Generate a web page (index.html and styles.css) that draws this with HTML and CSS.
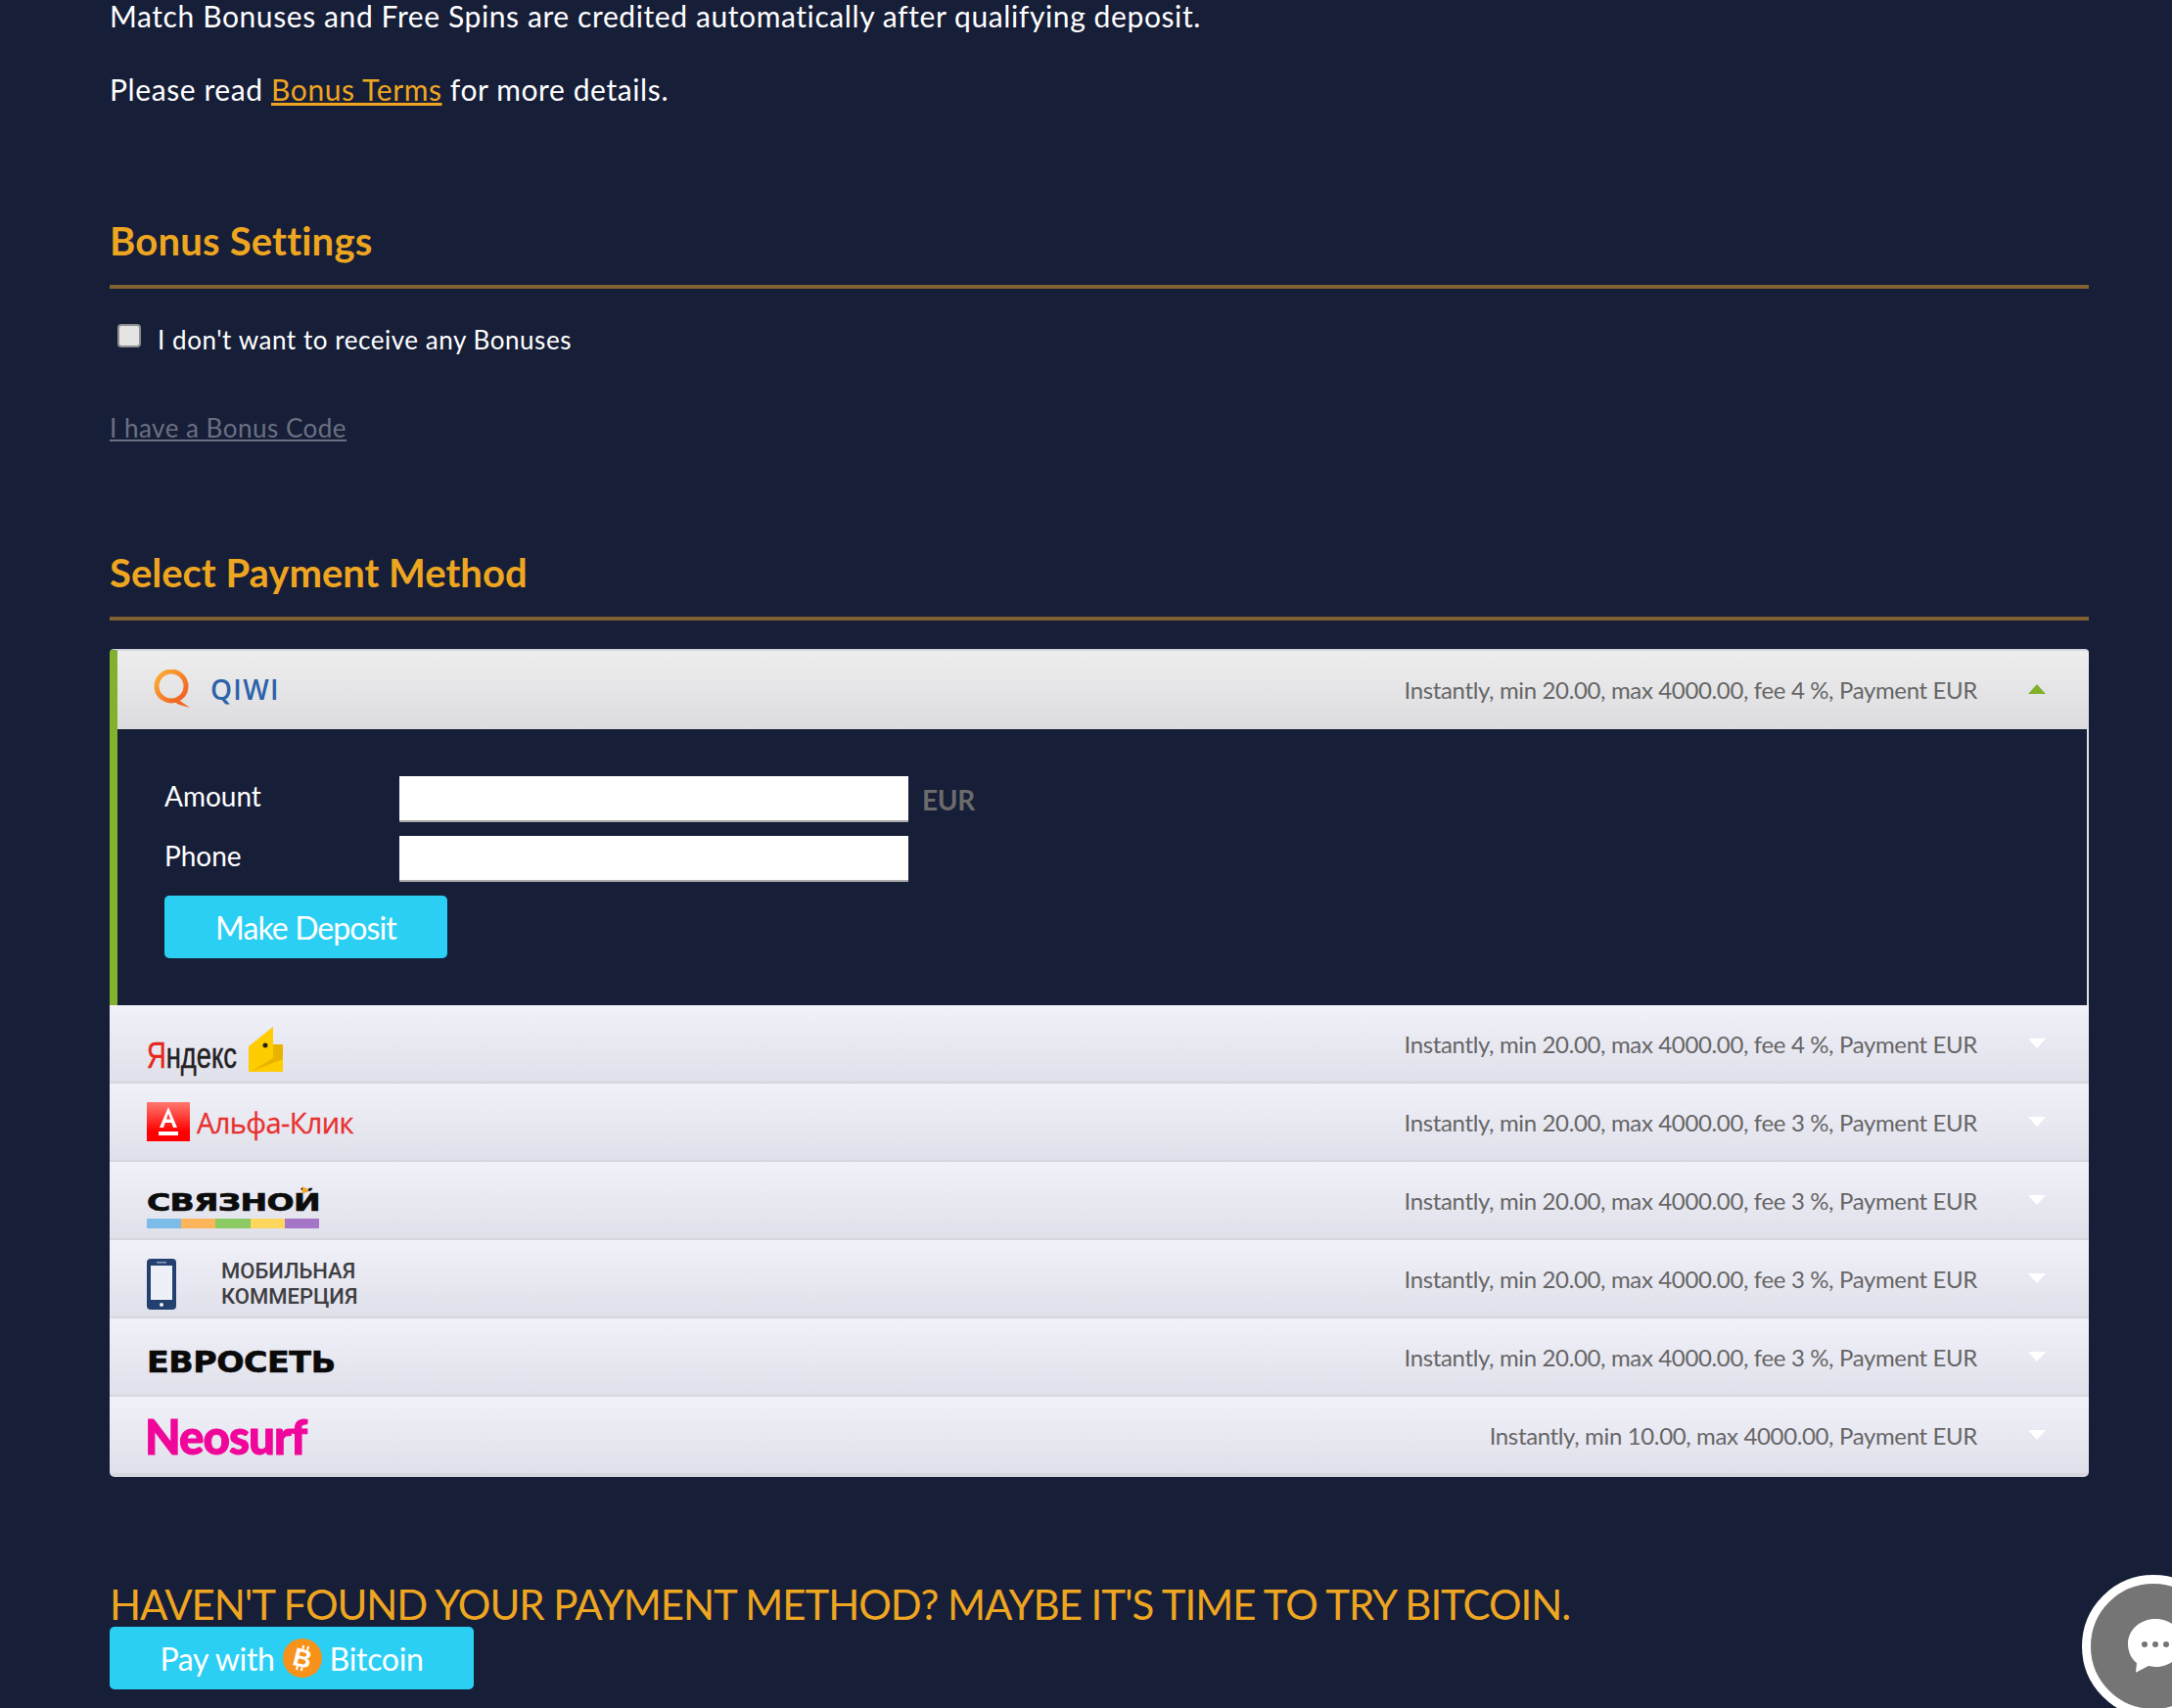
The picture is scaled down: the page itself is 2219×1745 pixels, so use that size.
FILE: index.html
```html
<!DOCTYPE html>
<html lang="en">
<head>
<meta charset="utf-8">
<title>Deposit</title>
<link rel="stylesheet" href="styles.css">
</head>
<body>
<main class="page">
  <p class="lead">Match Bonuses and Free Spins are credited automatically after qualifying deposit.</p>
  <p class="lead second">Please read <a class="terms" href="#">Bonus Terms</a> for more details.</p>

  <h2 class="section-title bonus-title">Bonus Settings</h2>
  <label class="check-row"><input class="check" type="checkbox"><span>I don't want to receive any Bonuses</span></label>
  <a class="code-link" href="#">I have a Bonus Code</a>

  <h2 class="section-title pay-title">Select Payment Method</h2>

  <section class="methods">
    <div class="row row-active">
      <div class="logo logo-qiwi">
        <svg class="q-ring" width="40" height="40" viewBox="0 0 40 40"><defs><linearGradient id="qg" x1="0" y1="0" x2="1" y2="1"><stop offset="0" stop-color="#fbb034"/><stop offset="1" stop-color="#f15a24"/></linearGradient></defs><circle cx="19" cy="17" r="15" fill="none" stroke="url(#qg)" stroke-width="5"/><path d="M17 30l8 0 13 9-11-3z" fill="#f26b21"/></svg>
        <span>QIWI</span>
      </div>
      <div class="info">Instantly, min 20.00, max 4000.00, fee 4 %, Payment EUR</div>
      <span class="arrow arrow-up"></span>
    </div>
    <form class="deposit">
      <div class="field"><label class="field-label">Amount</label><input class="field-input" type="text"><span class="cur">EUR</span></div>
      <div class="field"><label class="field-label">Phone</label><input class="field-input" type="text"></div>
      <button class="btn btn-deposit" type="button">Make Deposit</button>
    </form>

    <div class="row">
      <div class="logo logo-yandex">
        <span class="ya-text"><b>Я</b>ндекс</span>
        <svg class="wallet" width="36" height="48" viewBox="0 0 36 48"><path d="M1 21L26 1v18h10v28H1z" fill="#ffcc00"/><path d="M26 19h10v15L3 47l23-14z" fill="#e8b400"/><circle cx="18" cy="20" r="2.500" fill="#222"/></svg>
      </div>
      <div class="info">Instantly, min 20.00, max 4000.00, fee 4 %, Payment EUR</div>
      <span class="arrow"></span>
    </div>
    <div class="row">
      <div class="logo logo-alfa">
        <span class="alfa-mark"><svg width="26" height="32" viewBox="0 0 26 32"><path d="M13 1L4 22h4l1.800-5h6.400L18 22h4zM11 13.500l2-6 2 6z" fill="#fff"/><rect x="3" y="26" width="20" height="4" fill="#fff"/></svg></span>
        <span class="alfa-text">Альфа-Клик</span>
      </div>
      <div class="info">Instantly, min 20.00, max 4000.00, fee 3 %, Payment EUR</div>
      <span class="arrow"></span>
    </div>
    <div class="row">
      <div class="logo logo-svyaz">
        <span class="svyaz-text">СВЯЗНОЙ</span>
        <span class="strip"><i class="s1"></i><i class="s2"></i><i class="s3"></i><i class="s4"></i><i class="s5"></i></span>
        <span class="svyaz-tick"></span>
      </div>
      <div class="info">Instantly, min 20.00, max 4000.00, fee 3 %, Payment EUR</div>
      <span class="arrow"></span>
    </div>
    <div class="row">
      <div class="logo logo-mobile">
        <svg class="phone" width="30" height="52" viewBox="0 0 30 52"><rect width="30" height="52" rx="4" fill="#24406f"/><rect x="4" y="7" width="22" height="35" fill="#eef0f7"/><rect x="10" y="3" width="10" height="1.500" fill="#8fa0c0"/><circle cx="15" cy="47" r="2" fill="#eef0f7"/></svg>
        <span class="mobile-text">МОБИЛЬНАЯ<br>КОММЕРЦИЯ</span>
      </div>
      <div class="info">Instantly, min 20.00, max 4000.00, fee 3 %, Payment EUR</div>
      <span class="arrow"></span>
    </div>
    <div class="row">
      <div class="logo logo-evro"><span class="evro-text">ЕВРОСЕТЬ</span></div>
      <div class="info">Instantly, min 20.00, max 4000.00, fee 3 %, Payment EUR</div>
      <span class="arrow"></span>
    </div>
    <div class="row row-last">
      <div class="logo logo-neo"><span class="neo-text">Neosurf</span></div>
      <div class="info">Instantly, min 10.00, max 4000.00, Payment EUR</div>
      <span class="arrow"></span>
    </div>
  </section>

  <h3 class="bitcoin-title">HAVEN'T FOUND YOUR PAYMENT METHOD? MAYBE IT'S TIME TO TRY BITCOIN.</h3>
  <button class="btn btn-bitcoin" type="button">Pay with
    <svg class="btc" width="40" height="40" viewBox="0 0 40 40"><circle cx="20" cy="20" r="20" fill="#f7931a"/><text x="20" y="29" text-anchor="middle" transform="rotate(14 20 20)" class="btc-b">B</text><path d="M18 7v4M23 7v4M17 29v4M22 29v4" stroke="#fff" stroke-width="2" transform="rotate(14 20 20)"/></svg>
    Bitcoin</button>
</main>

<div class="chat">
  <svg width="60" height="60" viewBox="0 0 60 60"><path d="M30 3c-15 0-28 11-28 26 0 9 4 16 9 20l-1 10 13-7c2 0 5 1 7 1 16 0 28-11 28-25S46 3 30 3z" fill="#fff" transform="translate(0 -1) scale(1 .98)"/><circle cx="19" cy="28" r="3" fill="#757575"/><circle cx="30" cy="28" r="3" fill="#757575"/><circle cx="41" cy="28" r="3" fill="#757575"/></svg>
</div>
</body>
</html>
```
FILE: styles.css
```css
* { box-sizing: border-box; }
html, body { margin: 0; height: 1745px; overflow: hidden; }
body {
  background: #161e38;
  color: #fff;
  font-family: "Lato", "Open Sans", sans-serif;
}
.page { padding: 0 85px 0 112px; }
.lead { margin: -4px 0 0; font-size: 30px; line-height: 40px; letter-spacing: .6px; }
.lead.second { margin-top: 35px; }
.terms { color: #eea621; }
.section-title {
  margin: 0;
  color: #eea621;
  font-size: 40px;
  font-weight: 700;
  line-height: 50px;
  border-bottom: 4px solid #7f6230;
  padding-bottom: 20px;
}
.bonus-title { margin-top: 110px; letter-spacing: .2px; }
.check-row { display: flex; align-items: flex-start; margin-top: 36px; font-size: 26px; line-height: 36px; letter-spacing: .55px; }
.check {
  appearance: none;
  width: 24px; height: 24px; margin: 0 17px 0 8px;
  background: #e4e4e4; border: 2px solid #8f8f8f; border-radius: 4px;
}
.check-row span { margin-top: -2px; }
.code-link { display: block; margin-top: 54px; width: max-content; color: #6a7082; font-size: 26px; line-height: 36px; letter-spacing: .5px; }
.pay-title { margin-top: 105px; }
.methods { margin-top: 29px; }
.row {
  display: flex; align-items: center;
  height: 80px;
  padding: 0 44px 0 38px;
  background: linear-gradient(#f1f1fa, #e0e0ea);
  border-bottom: 2px solid #d6d6df;
}
.row-active {
  height: 82px;
  padding-left: 36px;
  padding-bottom: 2px;
  background: linear-gradient(#eeeeee, #dcdce0);
  border-top: 2px solid #d5d5e0;
  border-left: 8px solid #82b22d;
  border-bottom: 0;
  border-radius: 4px 4px 0 0;
}
.row-last { height: 82px; border-bottom: 4px solid #d6d6df; border-radius: 0 0 5px 5px; }
.info { margin-left: auto; color: #666; font-size: 24px; white-space: nowrap; letter-spacing: -.36px; }
.arrow { width: 0; height: 0; margin-left: 52px; border: 9px solid transparent; border-top: 10px solid #fff; border-bottom: 0; }
.arrow-up { border-top: 0; border-bottom: 10px solid #82b22d; }
.deposit {
  height: 282px;
  padding: 48px 0 0 48px;
  border-left: 8px solid #82b22d;
  border-right: 2px solid #e0e0ea;
}
.field { display: flex; align-items: center; height: 47px; margin-bottom: 14px; }
.field-label { width: 240px; margin-top: -7px; font-size: 28px; }
.field-input { width: 520px; height: 47px; padding: 0; background: #fff; border: 0; border-bottom: 2px solid #aaa; }
.cur { margin-left: 14px; color: #6b6b6b; font-size: 28px; font-weight: 700; letter-spacing: -.3px; }
.btn { display: flex; align-items: center; justify-content: center; height: 64px; background: #2bcff4; color: #fff; border: 0; border-radius: 5px; font-family: inherit; font-size: 32px; letter-spacing: -.3px; }
.btn-deposit { width: 289px; letter-spacing: -.9px; }
.logo { display: flex; align-items: center; }
.logo-qiwi { gap: 19px; color: #2d62aa; font-family: "Open Sans", sans-serif; font-size: 28px; font-weight: 600; letter-spacing: 1.3px; }
.logo-yandex { gap: 11px; margin-top: 10px; }
.wallet { margin-top: 2px; }
.ya-text { display: block; width: 92px; margin-top: 16px; color: #222; font-family: "Liberation Sans", sans-serif; font-size: 36px; line-height: 40px; white-space: nowrap; transform: scaleX(.76); transform-origin: left; -webkit-text-stroke: .5px currentColor; }
.ya-text b { color: #e8261c; font-weight: 400; }
.logo-alfa { gap: 7px; margin-top: 0; }
.alfa-mark { display: flex; align-items: center; justify-content: center; width: 44px; height: 40px; background: linear-gradient(#ff7a70, #ff0000 75%); }
.alfa-text { color: #e8312e; font-family: "Open Sans", sans-serif; font-size: 29px; white-space: nowrap; letter-spacing: -.6px; -webkit-text-stroke: .3px currentColor; }
.logo-svyaz { position: relative; flex-direction: column; align-items: flex-start; margin-top: 18px; }
.svyaz-text { display: block; color: #0c0c0c; font-family: "DejaVu Sans", sans-serif; font-weight: 700; font-size: 25px; line-height: 26px; letter-spacing: -.5px; white-space: nowrap; transform: scaleX(1.32); transform-origin: left; -webkit-text-stroke: .7px currentColor; }
.svyaz-tick { position: absolute; left: 159px; top: -4px; width: 0; height: 0; border-left: 7px solid #f5a623; border-top: 4px solid transparent; border-bottom: 4px solid transparent; }
.strip { display: flex; width: 176px; height: 10px; margin-top: 3px; }
.strip i { flex: 1; }
.s1 { background: #7cbce8; }
.s2 { background: #fdb55c; }
.s3 { background: #8ccb64; }
.s4 { background: #fdd65e; }
.s5 { background: #a576c8; }
.logo-mobile { gap: 46px; margin-top: 10px; }
.phone { margin-top: 2px; }
.mobile-text { margin-top: 2px; color: #3e3e42; font-family: "Roboto", sans-serif; font-size: 22px; font-weight: 500; line-height: 26px; white-space: nowrap; }
.logo-evro { margin-top: 10px; }
.evro-text { display: block; color: #0a0a0a; font-family: "DejaVu Sans", sans-serif; font-weight: 700; font-size: 30px; letter-spacing: -.4px; white-space: nowrap; transform: scaleX(1.11); transform-origin: left; -webkit-text-stroke: .6px currentColor; }
.logo-neo { margin-top: 2px; }
.neo-text { display: block; margin-left: -2px; color: #f0069a; font-family: "Lato", sans-serif; font-weight: 900; font-size: 50px; line-height: 56px; letter-spacing: -1px; transform: scaleX(.95); transform-origin: left; -webkit-text-stroke: 1px currentColor; }
.bitcoin-title { margin: 105px 0 0; color: #eea621; font-size: 42px; font-weight: 400; line-height: 50px; white-space: nowrap; letter-spacing: -1.05px; }
.btn-bitcoin { gap: 8px; width: 372px; margin-top: -2px; }
.btc-b { fill: #fff; font-family: "Liberation Sans", sans-serif; font-weight: 700; font-size: 26px; }
.chat {
  position: fixed; left: 2127px; top: 1609px;
  display: flex; align-items: center;
  width: 146px; height: 146px; padding-left: 36px;
  background: #757575; border: 9px solid #fff; border-radius: 50%;
}
```
